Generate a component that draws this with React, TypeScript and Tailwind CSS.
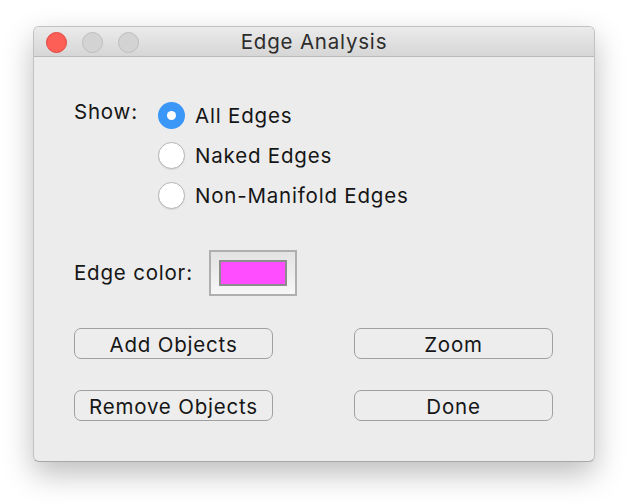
const options = ["All Edges", "Naked Edges", "Non-Manifold Edges"];
const buttons = ["Add Objects", "Zoom", "Remove Objects", "Done"];

const Radio = ({ checked }: { checked: boolean }) =>
  checked ? (
    <span className="flex h-[27px] w-[27px] items-center justify-center rounded-full bg-[#3b97f7]">
      <span className="h-[9px] w-[9px] rounded-full bg-white" />
    </span>
  ) : (
    <span className="h-[27px] w-[27px] rounded-full border border-[#b4b4b4] bg-white shadow-[0_1px_1px_rgba(0,0,0,0.08)]" />
  );

export default function App() {
  return (
    <div className="h-[504px] w-[628px] bg-white pl-[33px] pt-[26px] font-['Inter','Liberation_Sans',sans-serif] text-[20.5px] tracking-[0.8px] text-[#161616]">
      <div className="flex h-[436px] w-[562px] flex-col overflow-hidden rounded-[6px] border border-[#c2c2c2] border-b-[#a8a8a8] bg-[#ececec] shadow-[0_12px_30px_rgba(0,0,0,0.26)]">
        {/* title bar */}
        <div className="grid h-[30px] grid-cols-[1fr_auto_1fr] items-center border-b border-[#b9b9b9] bg-gradient-to-b from-[#ebebeb] to-[#d6d6d6]">
          <div className="flex items-center gap-[15px] pl-[12px]">
            <span className="h-[21px] w-[21px] rounded-full border border-[#e0443e] bg-[#fd5f57]" />
            <span className="h-[21px] w-[21px] rounded-full border border-[#bdbdbd] bg-[#d3d3d3]" />
            <span className="h-[21px] w-[21px] rounded-full border border-[#bdbdbd] bg-[#d3d3d3]" />
          </div>
          <div className="text-[#2d2d2d]">Edge Analysis</div>
          <div />
        </div>

        {/* content */}
        <div className="flex flex-col px-[40px] pt-[38px]">
          <div className="flex">
            <div className="w-[84px] pt-[5px] leading-[24px]">Show:</div>
            <div className="flex flex-col">
              {options.map((o, i) => (
                <label key={o} className="flex h-[40px] items-center gap-[10px]">
                  <Radio checked={i === 0} />
                  <span className="pt-[2px]">{o}</span>
                </label>
              ))}
            </div>
          </div>

          <div className="mt-[35px] flex items-center">
            <div className="w-[135px]">Edge color:</div>
            <div className="flex h-[46px] w-[88px] items-center justify-center border-2 border-[#afafaf] bg-gradient-to-b from-[#e3e3e3] to-[#f7f7f7]">
              <div className="h-[26px] w-[68px] border-2 border-[#8c8c8c] bg-[#ff4dff]" />
            </div>
          </div>

          <div className="mt-[32px] grid grid-cols-[199px_199px] gap-x-[81px] gap-y-[31px]">
            {buttons.map((b) => (
              <button
                key={b}
                className="flex h-[31px] items-center justify-center rounded-[7px] border-[1.5px] border-[#a0a0a0] bg-[#ededed] pt-[3px] text-[#161616]"
              >
                {b}
              </button>
            ))}
          </div>
        </div>
      </div>
    </div>
  );
}
